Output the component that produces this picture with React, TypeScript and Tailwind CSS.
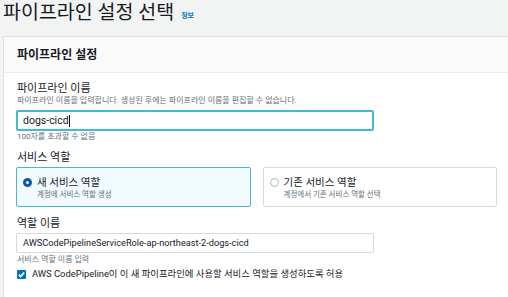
import React from 'react';

const font = { fontFamily: 'Roboto, "Noto Sans CJK KR", sans-serif' };

export default function App() {
    return (
        <div className="w-[508px] h-[297px] overflow-hidden bg-[#f2f3f3] text-[#16191f]" style={font}>
            {/* Title */}
            <div className="h-[36px] pl-[3px] flex items-start gap-[7px]">
                <h1 className="text-[19.5px] leading-[25px] font-normal">파이프라인 설정 선택</h1>
                <a className="text-[7px] leading-[8px] mt-[12px] text-[#0073bb] font-bold">정보</a>
            </div>

            {/* Card */}
            <div className="ml-[3px] border-l border-t border-[#dfe3e3] bg-white h-[261px]">
                <div className="h-[36px] bg-[#fafafa] border-b border-[#eaeded] flex items-center pl-[13px]">
                    <h2 className="text-[12px] font-bold leading-none">파이프라인 설정</h2>
                </div>

                <div className="pl-[12px] pt-[9px]">
                    {/* Pipeline name */}
                    <div className="pl-[1px] text-[11px] leading-[14px]">파이프라인 이름</div>
                    <div className="pl-[1px] text-[8px] leading-[10px] text-[#687078]">
                        파이프라인 이름을 입력합니다. 생성된 후에는 파이프라인 이름을 편집할 수 없습니다.
                    </div>
                    <div className="mt-[4px] w-[358px] h-[21px] border-2 border-[#44b9d6] rounded-[2px] flex items-center pl-[5px] text-[10.5px]">
                        dogs-cicd<span className="w-px h-[12px] bg-[#16191f]" />
                    </div>
                    <div className="pl-[1px] text-[8px] leading-[11px] text-[#687078]">100자를 초과할 수 없음</div>

                    {/* Service role */}
                    <div className="mt-[9px] pl-[1px] text-[11px] leading-[14px]">서비스 역할</div>
                    <div className="mt-[2px] grid grid-cols-2 gap-[12px] w-[481px]">
                        <div className="h-[40px] border border-[#44b9d6] bg-[#f1faff] rounded-[2px] flex items-start pl-[6px] pt-[8px] gap-[5px]">
                            <span className="mt-[2px] w-[9px] h-[9px] rounded-full border-[3px] border-[#0a5a9e] bg-white shrink-0" />
                            <div>
                                <div className="text-[10.5px] leading-[13px]">새 서비스 역할</div>
                                <div className="text-[7.5px] leading-[11px] text-[#687078]">계정에 서비스 역할 생성</div>
                            </div>
                        </div>
                        <div className="h-[40px] border border-[#d5dbdb] rounded-[2px] flex items-start pl-[6px] pt-[8px] gap-[5px]">
                            <span className="mt-[2px] w-[9px] h-[9px] rounded-full border border-[#aab7b8] bg-white shrink-0" />
                            <div>
                                <div className="text-[10.5px] leading-[13px]">기존 서비스 역할</div>
                                <div className="text-[7.5px] leading-[11px] text-[#687078]">계정에서 기존 서비스 역할 선택</div>
                            </div>
                        </div>
                    </div>

                    {/* Role name */}
                    <div className="mt-[10px] pl-[1px] text-[11px] leading-[14px]">역할 이름</div>
                    <div className="mt-[2px] w-[358px] h-[20px] border border-[#d5dbdb] rounded-[2px] flex items-center pl-[6px] text-[9.2px]">
                        AWSCodePipelineServiceRole-ap-northeast-2-dogs-cicd
                    </div>
                    <div className="mt-[2px] pl-[1px] text-[8px] leading-[10px] text-[#687078]">서비스 역할 이름 입력</div>
                    <div className="mt-[3px] flex items-center gap-[6px] pl-[1px]">
                        <span className="w-[9px] h-[9px] rounded-[1px] bg-[#0073bb] flex items-center justify-center">
                            <svg viewBox="0 0 10 10" className="w-[9px] h-[9px]" fill="none" stroke="white" strokeWidth={1.8}>
                                <path d="M2 5.2l2 2 4-4.5" />
                            </svg>
                        </span>
                        <span className="text-[9.4px] leading-[12px]">AWS CodePipeline이 이 새 파이프라인에 사용할 서비스 역할을 생성하도록 허용</span>
                    </div>
                </div>
            </div>
        </div>
    );
}
